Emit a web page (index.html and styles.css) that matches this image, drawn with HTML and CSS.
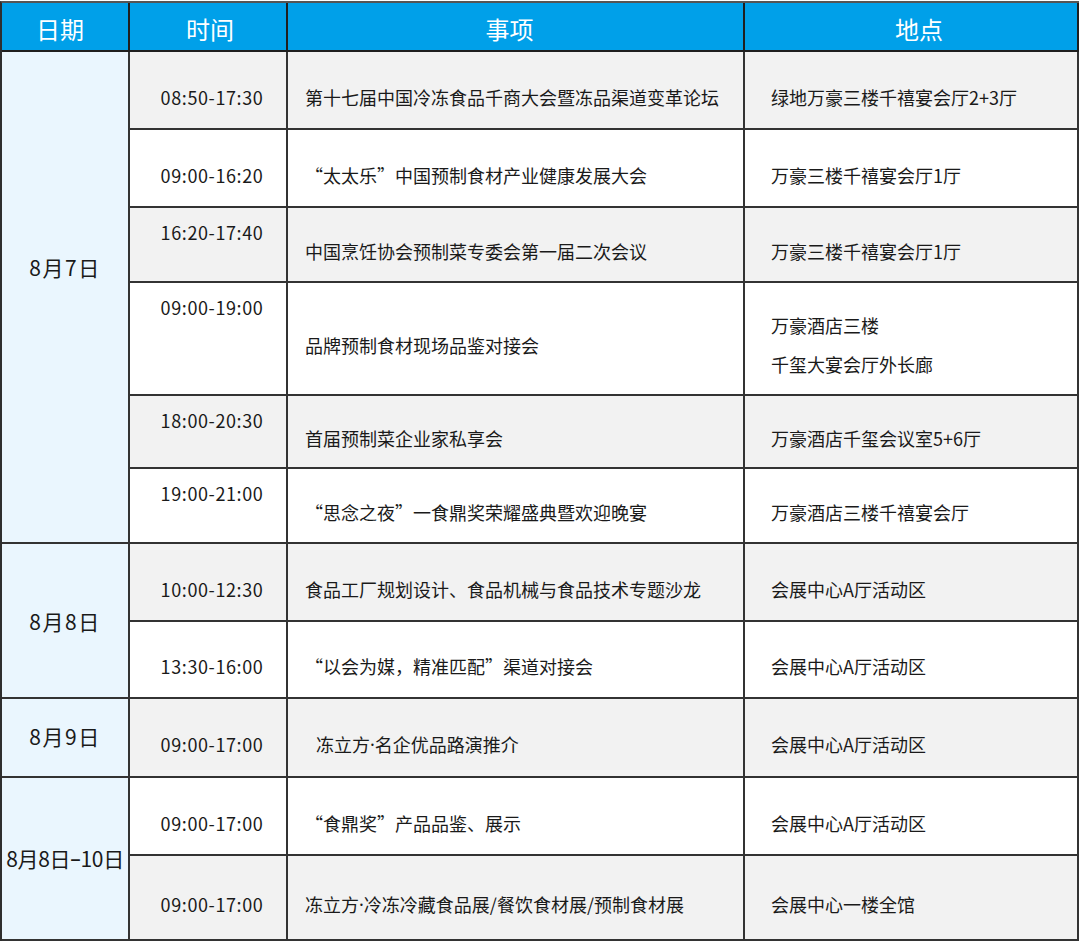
FILE: index.html
```html
<!DOCTYPE html>
<html lang="zh-CN">
<head>
<meta charset="utf-8">
<title>日程</title>
<link rel="stylesheet" href="styles.css">
</head>
<body>
<div class="sched">
  <div class="c hd h1">日期</div>
  <div class="c hd h2">时间</div>
  <div class="c hd h3">事项</div>
  <div class="c hd h4">地点</div>

  <div class="c date d7">8月7日</div>
  <div class="c tm mid g">08:50-17:30</div>
  <div class="c ev mid g">第十七届中国冷冻食品千商大会暨冻品渠道变革论坛</div>
  <div class="c loc mid g">绿地万豪三楼千禧宴会厅2+3厅</div>

  <div class="c tm mid">09:00-16:20</div>
  <div class="c ev mid">“太太乐”中国预制食材产业健康发展大会</div>
  <div class="c loc mid">万豪三楼千禧宴会厅1厅</div>

  <div class="c tm top g">16:20-17:40</div>
  <div class="c ev mid g">中国烹饪协会预制菜专委会第一届二次会议</div>
  <div class="c loc mid g">万豪三楼千禧宴会厅1厅</div>

  <div class="c tm top">09:00-19:00</div>
  <div class="c ev mid">品牌预制食材现场品鉴对接会</div>
  <div class="c loc mid two"><span>万豪酒店三楼</span><span>千玺大宴会厅外长廊</span></div>

  <div class="c tm top g">18:00-20:30</div>
  <div class="c ev mid g">首届预制菜企业家私享会</div>
  <div class="c loc mid g">万豪酒店千玺会议室5+6厅</div>

  <div class="c tm top">19:00-21:00</div>
  <div class="c ev mid">“思念之夜”一食鼎奖荣耀盛典暨欢迎晚宴</div>
  <div class="c loc mid">万豪酒店三楼千禧宴会厅</div>

  <div class="c date d8">8月8日</div>
  <div class="c tm mid g">10:00-12:30</div>
  <div class="c ev mid g">食品工厂规划设计、食品机械与食品技术专题沙龙</div>
  <div class="c loc mid g">会展中心A厅活动区</div>

  <div class="c tm mid">13:30-16:00</div>
  <div class="c ev mid">“以会为媒，精准匹配”渠道对接会</div>
  <div class="c loc mid">会展中心A厅活动区</div>

  <div class="c date d9">8月9日</div>
  <div class="c tm mid g">09:00-17:00</div>
  <div class="c ev mid g ind">冻立方<span class="lat">·</span>名企优品路演推介</div>
  <div class="c loc mid g">会展中心A厅活动区</div>

  <div class="c date d10">8月8日<span class="lat">–</span>10日</div>
  <div class="c tm mid">09:00-17:00</div>
  <div class="c ev mid">“食鼎奖”产品品鉴、展示</div>
  <div class="c loc mid">会展中心A厅活动区</div>

  <div class="c tm mid g">09:00-17:00</div>
  <div class="c ev mid g">冻立方<span class="lat">·</span>冷冻冷藏食品展/餐饮食材展/预制食材展</div>
  <div class="c loc mid g">会展中心一楼全馆</div>
</div>
</body>
</html>
```
FILE: styles.css
```css
html, body {
  margin: 0;
  padding: 0;
  background: #ffffff;
}
body {
  font-family: "Noto Sans CJK SC", "Noto Sans", sans-serif;
  color: #1a1a1a;
}
.sched {
  margin-top: 1px;
  width: 1079px;
  box-sizing: border-box;
  border-left: 2px solid #2e2e2e;
  border-top: 2px solid #555555;
  display: grid;
  grid-template-columns: 128px 158px 457px 334px;
  grid-template-rows: 49px 78px 78px 75px 113px 73px 75px 78px 77px 79px 78px 85px;
}
.c {
  box-sizing: border-box;
  border-right: 2px solid #333333;
  border-bottom: 2px solid #333333;
  display: flex;
  font-size: 18px;
  line-height: 27px;
  white-space: nowrap;
  background: #ffffff;
}
.g { background: #f2f2f2; }
.lat { font-family: "Noto Sans", "Liberation Sans", sans-serif; }
.hd {
  background: #00a0e9;
  color: #ffffff;
  font-size: 24px;
  justify-content: center;
  align-items: center;
  padding-top: 4px;
  border-bottom-color: #1f1f1f;
  border-right-color: #1f1f1f;
}
.h1 { padding-right: 10px; }
.h2 { padding-left: 4px; }
.h3 { padding-right: 12px; }
.h4 { padding-left: 16px; }
.date {
  grid-column: 1;
  background: #eaf6fe;
  font-size: 21px;
  justify-content: center;
  align-items: center;
  letter-spacing: 1.5px;
}
.d7 { grid-row: 2 / 8; padding-bottom: 60px; }
.d8 { grid-row: 8 / 10; padding-top: 2px; }
.d9 { grid-row: 10 / 11; padding-bottom: 2px; }
.d10 { grid-row: 11 / 13; letter-spacing: -0.3px; }
.mid {
  align-items: center;
  padding-top: 14px;
}
.top {
  align-items: flex-start;
  padding-top: 11px;
}
.tm {
  grid-column: 2;
  justify-content: center;
  padding-left: 8px;
  letter-spacing: 0.6px;
}
.ev {
  grid-column: 3;
  padding-left: 17px;
}
.ind { padding-left: 28px; }
.loc {
  grid-column: 4;
  padding-left: 26px;
}
.two {
  flex-direction: column;
  justify-content: center;
  align-items: flex-start;
  line-height: 39px;
  padding-top: 12px;
}
```
